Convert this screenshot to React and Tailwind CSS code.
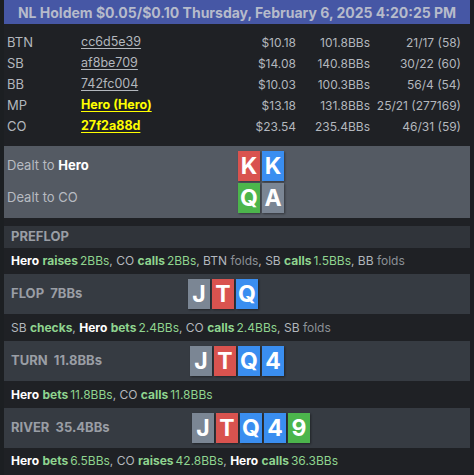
const CARD_COLORS = {
  r: 'bg-[#d9534f]',
  b: 'bg-[#3a8ef0]',
  g: 'bg-[#4cb54c]',
  s: 'bg-[#7b8694]',
};

function Card({ rank, c }) {
  return (
    <div
      className={`w-[22px] h-[30px] ${CARD_COLORS[c]} flex items-center justify-center text-white font-bold text-[23px] leading-none shadow-[1px_1px_2px_rgba(0,0,0,0.4)]`}
    >
      {rank}
    </div>
  );
}

function Cards({ cards }) {
  return (
    <div className="flex gap-[2px]">
      {cards.map(([rank, c], i) => (
        <Card key={i} rank={rank} c={c} />
      ))}
    </div>
  );
}

const players = [
  { pos: 'BTN', name: 'cc6d5e39', money: '$10.18', bbs: '101.8BBs', stats: '21/17 (58)' },
  { pos: 'SB', name: 'af8be709', money: '$14.08', bbs: '140.8BBs', stats: '30/22 (60)' },
  { pos: 'BB', name: '742fc004', money: '$10.03', bbs: '100.3BBs', stats: '56/4 (54)' },
  { pos: 'MP', name: 'Hero (Hero)', money: '$13.18', bbs: '131.8BBs', stats: '25/21 (277169)', hi: true },
  { pos: 'CO', name: '27f2a88d', money: '$23.54', bbs: '235.4BBs', stats: '46/31 (59)', hi: true },
];

const N = ({ children }) => <span className="text-[#b3b7bd]">{children}</span>;
const H = () => <span className="text-white font-bold">Hero</span>;
const V = ({ children }) => <span className="text-[#8fd48f] font-bold">{children}</span>;
const A = ({ children }) => <span className="text-[#8fd48f] ml-[2px]">{children}</span>;
const F = () => <span className="text-[#8b9096]">folds</span>;
const C = () => <span className="text-[#b3b7bd]">, </span>;

function Action({ children, h = 'h-[26px]' }) {
  return (
    <div className={`${h} bg-[#1f2125] flex items-center px-[7px] text-[12px] whitespace-nowrap`}>
      <div>{children}</div>
    </div>
  );
}

function Street({ label, pot, cards, cardLeft }) {
  return (
    <div className="h-[40px] bg-[#363b42] flex items-center">
      <div className={`${cardLeft} pl-[7px] text-[13px] font-bold text-[#9a9ea5] whitespace-nowrap`}>
        {label}&nbsp;&nbsp;{pot}
      </div>
      <Cards cards={cards} />
    </div>
  );
}

export default function App() {
  return (
    <div
      className="w-[474px] h-[475px] bg-[#1c1f22] overflow-hidden"
      style={{ fontFamily: '"Inter", "Liberation Sans", sans-serif' }}
    >
      <div className="mx-[4px] w-[466px] h-full bg-[#1f2125]">
        <div className="h-[24px] bg-[#4657a5] flex items-center justify-center text-[14px] font-bold text-[#b6bbcb] whitespace-nowrap">
          NL Holdem $0.05/$0.10 Thursday, February 6, 2025 4:20:25 PM
        </div>

        <div className="pt-[8px] pb-[9px] pl-[3px] pr-[9px] text-[12px] text-[#b3b7bd]">
          {players.map((p) => (
            <div key={p.pos} className="h-[21px] flex items-center whitespace-nowrap">
              <div className="w-[74px] text-[13px]">{p.pos}</div>
              <div className="flex-1 text-[12.5px]">
                <span
                  className={`underline underline-offset-2 ${p.hi ? 'text-[#ffff00] font-bold' : 'text-[#b3b7bd]'}`}
                >
                  {p.name}
                </span>
              </div>
              <div className="w-[80px] text-right">{p.money}</div>
              <div className="w-[74px] text-right">{p.bbs}</div>
              <div className="w-[91px] text-right">{p.stats}</div>
            </div>
          ))}
        </div>

        <div className="bg-[#545a63] py-[5px] flex flex-col gap-[2px] text-[13px] text-[#b7bbc1]">
          <div className="flex items-center">
            <div className="w-[234px] pl-[3px]">
              Dealt to <span className="text-white font-bold">Hero</span>
            </div>
            <Cards cards={[['K', 'r'], ['K', 'b']]} />
          </div>
          <div className="flex items-center">
            <div className="w-[234px] pl-[3px]">Dealt to CO</div>
            <Cards cards={[['Q', 'g'], ['A', 's']]} />
          </div>
        </div>

        <div className="h-[8px]" />

        <div className="h-[22px] bg-[#30343a] flex items-center px-[7px] text-[13px] font-bold text-[#9a9ea5]">
          PREFLOP
        </div>
        <Action>
          <H /> <V>raises</V>
          <A>2BBs</A>
          <C />
          <N>CO</N> <V>calls</V>
          <A>2BBs</A>
          <C />
          <N>BTN</N> <F />
          <C />
          <N>SB</N> <V>calls</V>
          <A>1.5BBs</A>
          <C />
          <N>BB</N> <F />
        </Action>

        <Street label="FLOP" pot="7BBs" cardLeft="w-[184px]" cards={[['J', 's'], ['T', 'r'], ['Q', 'b']]} />
        <Action h="h-[27px]">
          <N>SB</N> <V>checks</V>
          <C />
          <H /> <V>bets</V>
          <A>2.4BBs</A>
          <C />
          <N>CO</N> <V>calls</V>
          <A>2.4BBs</A>
          <C />
          <N>SB</N> <F />
        </Action>

        <Street
          label="TURN"
          pot="11.8BBs"
          cardLeft="w-[186px]"
          cards={[['J', 's'], ['T', 'r'], ['Q', 'b'], ['4', 'b']]}
        />
        <Action h="h-[27px]">
          <H /> <V>bets</V>
          <A>11.8BBs</A>
          <C />
          <N>CO</N> <V>calls</V>
          <A>11.8BBs</A>
        </Action>

        <Street
          label="RIVER"
          pot="35.4BBs"
          cardLeft="w-[188px]"
          cards={[['J', 's'], ['T', 'r'], ['Q', 'b'], ['4', 'b'], ['9', 'g']]}
        />
        <Action>
          <H /> <V>bets</V>
          <A>6.5BBs</A>
          <C />
          <N>CO</N> <V>raises</V>
          <A>42.8BBs</A>
          <C />
          <H /> <V>calls</V>
          <A>36.3BBs</A>
        </Action>
      </div>
    </div>
  );
}
